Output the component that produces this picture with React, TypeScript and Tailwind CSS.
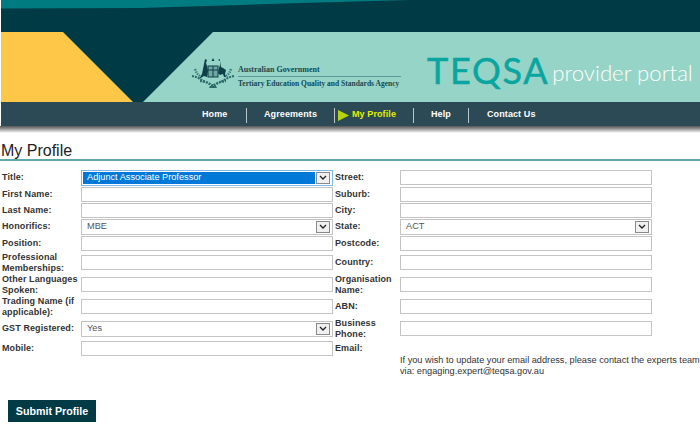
const labelClass = 'text-[9px] font-bold leading-[11px] tracking-[0.1px] text-[#333333]'

function Field({ value, active }: { value?: string; active?: boolean }) {
  if (value === undefined) {
    return <input className="h-[15px] w-[252px] border border-[#c4c4c4] bg-white" />
  }
  return (
    <div
      className={`flex h-[16px] w-[252px] items-center justify-between border bg-white pr-[2px] text-[9.2px] ${
        active ? 'border-[#7db8e8] pl-[1px]' : 'border-[#c4c4c4] pl-[5px] text-[#555555]'
      }`}
    >
      <span className={active ? 'flex h-[12px] flex-1 items-center bg-[#0078d7] pl-[4px] text-white' : ''}>{value}</span>
      <span className="ml-[1px] flex h-[12px] w-[14px] items-center justify-center border border-[#8a8a8a] bg-[#f0f0f0]">
        <svg width="8" height="5" viewBox="0 0 8 5" fill="none">
          <path d="M1 1l3 3 3-3" stroke="#222" strokeWidth="1.3" />
        </svg>
      </span>
    </div>
  )
}

const rows = [
  { h: 'h-[17px]', l: 'Title:', lv: 'Adjunct Associate Professor', active: true, r: 'Street:' },
  { h: 'h-[16px]', l: 'First Name:', r: 'Suburb:' },
  { h: 'h-[16px]', l: 'Last Name:', r: 'City:' },
  { h: 'h-[17px]', l: 'Honorifics:', lv: 'MBE', r: 'State:', rv: 'ACT' },
  { h: 'h-[17px]', l: 'Position:', r: 'Postcode:' },
  { h: 'h-[21px]', l: 'Professional Memberships:', r: 'Country:' },
  { h: 'h-[23px]', l: 'Other Languages Spoken:', r: 'Organisation Name:' },
  { h: 'h-[21px]', l: 'Trading Name (if applicable):', r: 'ABN:' },
  { h: 'h-[23px]', l: 'GST Registered:', lv: 'Yes', r: 'Business Phone:' },
  { h: 'h-[17px]', l: 'Mobile:', r: 'Email:', noRightField: true }
] as { h: string; l: string; lv?: string; active?: boolean; r: string; rv?: string; noRightField?: boolean }[]

function Crest() {
  return (
    <svg width="44" height="32" viewBox="0 0 44 32" fill="none" className="shrink-0">
      {/* wattle spray */}
      <path d="M4 12c1 3 2 5 5 7M40 12c-1 3-2 5-5 7" stroke="#3f7f7c" strokeWidth="2.500" strokeDasharray="1.500 1" />
      <path d="M1 19c5 1 9 3 13 6M43 19c-5 1-9 3-13 6" stroke="#2c6a68" strokeWidth="2" strokeDasharray="2 1" />
      <path d="M9 24c4 0 9 2 13 5 4-3 9-5 13-5" stroke="#2c6a68" strokeWidth="2.500" strokeDasharray="2 1" />
      {/* kangaroo */}
      <path d="M14 2l2 1-1 3 1 3 1 5-1 6-3-1-5 3 3-5 1-5 1-5z" fill="#0f3f48" />
      {/* emu */}
      <path d="M29 2l-2 1 2 1 1 6 2 1 3 2-1 4 1 3h-2l-1-3-3 1-2-2 1-5 1-3z" fill="#0f3f48" />
      {/* shield */}
      <rect x="17" y="9" width="10" height="11" fill="#6fa8a3" stroke="#0f3f48" />
      <path d="M17 13h10M22 9v11" stroke="#0f3f48" strokeWidth="1" />
      <path d="M22 1l1.500 3h-3z" fill="#0f3f48" />
      <path d="M19 29h6l1 2h-8z" fill="#2c6a68" />
    </svg>
  )
}

function Banner() {
  return (
    <div className="relative flex h-[70px] items-start bg-[#96d4c7]">
      <svg className="absolute inset-0" width="700" height="70" viewBox="0 0 700 70">
        <polygon points="1,0 63,0 133,70 1,70" fill="#fec748" />
        <polygon points="0,0 1,0 1,70 0,70" fill="#ffffff" />
        <polygon points="63,0 213,0 143,70 133,70" fill="#003a44" />
      </svg>
      <div className="relative ml-[191px] mt-[25px] flex items-start">
        <Crest />
        <div className="ml-[3px] mt-[8px] w-[163px] font-['Liberation_Serif',serif] text-[8px] font-bold leading-[10px] text-[#174a52]">
          <div className="border-b border-[#5f9a98] pb-[1px]">Australian Government</div>
          <div className="whitespace-nowrap pt-[2px] text-[7.500px]">Tertiary Education Quality and Standards Agency</div>
        </div>
      </div>
      <div className="relative ml-[26px] mt-[16px] flex items-baseline whitespace-nowrap font-['Lato',sans-serif]">
        <span className="text-[36px] leading-[44px] tracking-[1.7px] text-[#0aa5a0] [-webkit-text-stroke:0.5px_#0aa5a0]">TEQSA</span>
        <span className="relative -top-[3px] ml-[3px] text-[22.200px] font-light leading-[44px] text-white">provider portal</span>
      </div>
    </div>
  )
}

function Nav() {
  const sep = 'h-[15px] w-px bg-[#b9c6ca]'
  return (
    <nav className="ml-px flex h-[24px] items-center bg-[#2c4a55] pl-[201px] pt-[2px] text-[9px] font-bold tracking-[0.1px] text-white">
      <span className="w-[44px]">Home</span>
      <span className={sep} />
      <span className="ml-[17px] w-[70px]">Agreements</span>
      <span className={sep} />
      <svg width="11" height="11" viewBox="0 0 11 11" className="ml-[3px] mr-[3px]">
        <polygon points="0,0 11,5.500 0,11" fill="#b9d40f" />
      </svg>
      <span className="w-[61px] text-[#e2ee00]">My Profile</span>
      <span className={sep} />
      <span className="ml-[17px] w-[37px]">Help</span>
      <span className={sep} />
      <span className="ml-[18px]">Contact Us</span>
    </nav>
  )
}

export default function App() {
  return (
    <div className="h-[433px] w-[700px] overflow-hidden bg-white font-['Liberation_Sans',Arial,sans-serif]">
      <div className="relative ml-px h-[32px] bg-[#003a44]">
        <svg className="absolute inset-0" width="699" height="9" viewBox="0 0 699 9">
          <polygon points="0,0 410,0 300,3 140,8 0,8.500" fill="#007b80" />
        </svg>
      </div>
      <Banner />
      <Nav />
      <div className="h-[7px] bg-gradient-to-b from-[#555555] to-white" />
      <div className="mt-[8px] h-[20px] border-b-2 border-[#5fa9aa] pl-[1px] text-[16px] leading-[20px] text-[#222222]">
        My Profile
      </div>
      <form className="mt-[8px]">
        {rows.map((row) => (
          <div key={row.l} className={`flex items-center ${row.h}`}>
            <div className={`${labelClass} w-[81px] pl-[2px]`}>{row.l}</div>
            <Field value={row.lv} active={row.active} />
            <div className={`${labelClass} w-[67px] pl-[2px]`}>{row.r}</div>
            {!row.noRightField && <Field value={row.rv} />}
          </div>
        ))}
      </form>
      <div className="-mt-[2px] ml-[400px] w-[300px] whitespace-nowrap text-[9.200px] leading-[11px] text-[#333333]">
        <div>If you wish to update your email address, please contact the experts team</div>
        <div>via: engaging.expert@teqsa.gov.au</div>
      </div>
      <button className="ml-[8px] mt-[23px] h-[22px] w-[88px] bg-[#003a44] text-[10.700px] font-bold text-white">
        Submit Profile
      </button>
    </div>
  )
}
